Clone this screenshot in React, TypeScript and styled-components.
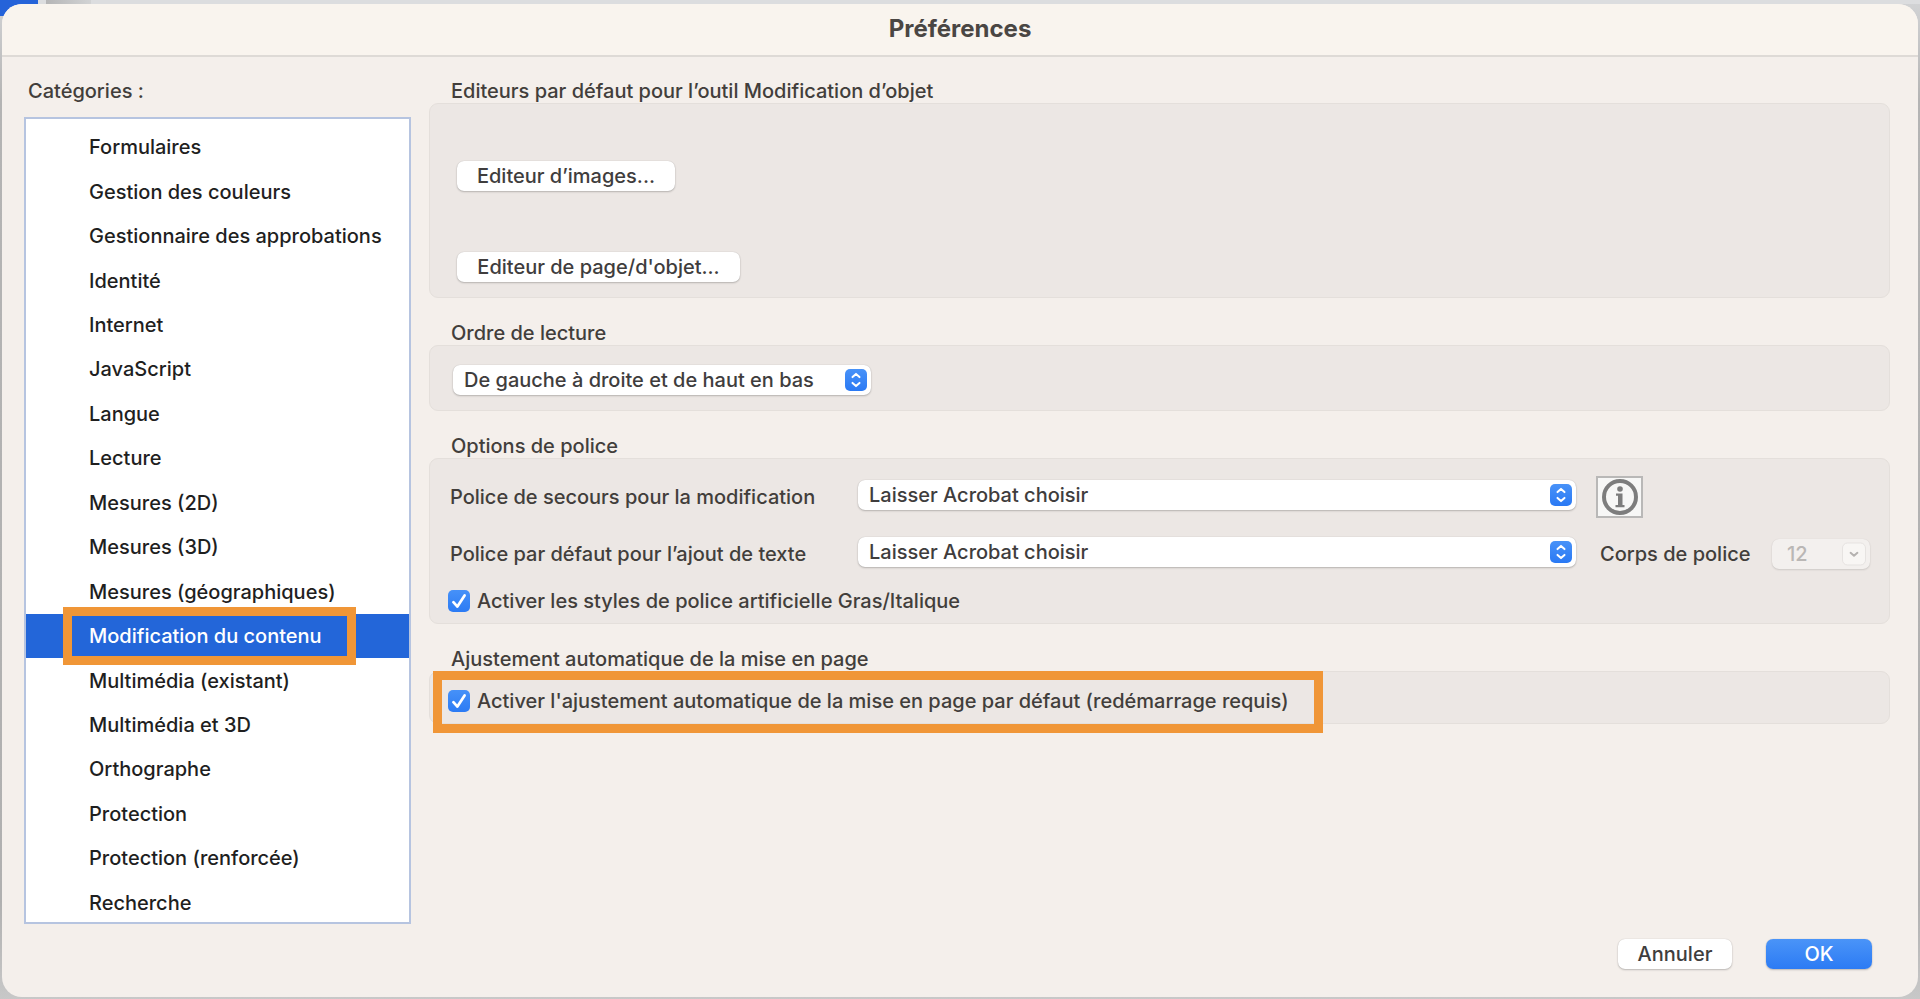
import React, { useId, useState } from "react";
import styled, { createGlobalStyle, css } from "styled-components";

const GlobalStyle = createGlobalStyle`
  *, *::before, *::after { box-sizing: border-box; }
  body {
    margin: 0;
    background: #b9b8b8;
    color: #423e3b;
    font-family: Inter, "Liberation Sans", sans-serif;
    font-size: 20px;
    font-weight: 500;
    line-height: 24px;
  }
  button, select, input { font: inherit; color: inherit; margin: 0; }
`;

const Desktop = styled.div`
  display: flex;
  min-height: 100vh;
  padding: 4px 2px 3px;
  background:
    linear-gradient(#2563d9, #2563d9) 0 0 / 38px 16px no-repeat,
    linear-gradient(90deg, #b5b5b6, #d2d3d4) 46px 0 / 45px 4px no-repeat,
    linear-gradient(#dcdddf, #dcdddf) 0 0 / 100% 4px no-repeat,
    linear-gradient(#d2d3d5, #b4b4b4 100px, #b0b0b0 90%, #c8c8c8);
`;

const Window = styled.div`
  flex: 1;
  display: flex;
  flex-direction: column;
  border-radius: 20px;
  background: #f4efeb;
  overflow: hidden;
`;

const TitleBar = styled.header`
  height: 53px;
  display: flex;
  justify-content: center;
  padding-top: 13px;
  background: #f9f4ee;
  border-bottom: 2px solid #dedad6;
`;

const Title = styled.h1`
  margin: 0;
  font-size: 24px;
  line-height: 24px;
  font-weight: 700;
  color: #4a4643;
`;

const Body = styled.div`
  flex: 1;
  display: flex;
  gap: 18px;
  padding: 22px 28px 0 22px;
`;

const Sidebar = styled.nav`
  flex: none;
  width: 387px;
  display: flex;
  flex-direction: column;
  gap: 14px;
`;

const SidebarLabel = styled.h2`
  margin: 0;
  padding-left: 4px;
  font-size: 20px;
  line-height: 24px;
  font-weight: 500;
`;

const ListFrame = styled.div`
  height: 807px;
  padding-top: 6px;
  border: 2px solid #b6c4e0;
  background: #fff;
  overflow: hidden;
`;

const List = styled.ul`
  height: 800px;
  margin: 0;
  padding: 0;
  list-style: none;
  display: grid;
  grid-auto-rows: 1fr;
`;

const Category = styled.button<{ $selected: boolean }>`
  width: 100%;
  height: 100%;
  padding: 0 0 0 63px;
  border: 0;
  text-align: left;
  white-space: nowrap;
  background: ${(p) => (p.$selected ? "#2366d9" : "transparent")};
  color: ${(p) => (p.$selected ? "#fff" : "#1f1f1f")};
`;

const highlight = css`
  position: relative;
  &::after {
    content: "";
    position: absolute;
    border: 9px solid #f09637;
    pointer-events: none;
  }
`;

const CategoryName = styled.span<{ $marked: boolean }>`
  ${(p) => p.$marked && highlight}
  &::after { inset: -17px -34px -17px -26px; }
`;

const Settings = styled.main`
  flex: 1;
  min-width: 0;
  display: flex;
  flex-direction: column;
  gap: 23px;
`;

const GroupTitle = styled.h2`
  margin: 0;
  padding-left: 22px;
  font-size: 20px;
  line-height: 24px;
  font-weight: 500;
`;

const Panel = styled.div<{ $pad: string; $gap?: number }>`
  display: flex;
  flex-direction: column;
  align-items: flex-start;
  gap: ${(p) => p.$gap ?? 0}px;
  padding: ${(p) => p.$pad};
  border: 1px solid #e4dfdb;
  border-radius: 9px;
  background: #ece7e4;
`;

const PushButton = styled.button<{ $primary?: boolean; $width: number }>`
  width: ${(p) => p.$width}px;
  height: 30px;
  padding: 0;
  border: 0;
  border-radius: 7px;
  white-space: nowrap;
  color: ${(p) => (p.$primary ? "#fff" : "#3f3d3d")};
  background: ${(p) => (p.$primary ? "linear-gradient(#4a94f8, #2c7bf4)" : "#fff")};
  box-shadow: 0 0 1px rgba(0, 0, 0, 0.2), 0 1px 2px rgba(0, 0, 0, 0.22);
`;

const SelectBox = styled.div<{ $width?: number }>`
  position: relative;
  width: ${(p) => (p.$width ? `${p.$width}px` : "100%")};
`;

const NativeSelect = styled.select`
  display: block;
  width: 100%;
  height: 30px;
  padding: 0 40px 0 11px;
  appearance: none;
  border: 0;
  border-radius: 7px;
  background: #fff;
  color: #3f3d3d;
  box-shadow: 0 0 1px rgba(0, 0, 0, 0.2), 0 1px 2px rgba(0, 0, 0, 0.22);
  &:disabled {
    padding: 0 28px 0 15px;
    background: #f3f0ee;
    color: #bab7b5;
    opacity: 1;
    box-shadow: 0 0 1px rgba(0, 0, 0, 0.1), 0 1px 2px rgba(0, 0, 0, 0.12);
  }
`;

const SelectIcon = styled.svg`
  position: absolute;
  top: 3px;
  right: 4px;
  pointer-events: none;
`;

const FontGrid = styled.div`
  width: 100%;
  padding-left: 2px;
  display: grid;
  grid-template-columns: 388px minmax(0, 1fr) 274px;
  grid-auto-rows: 42px;
  gap: 15px 20px;
  align-items: center;
`;

const FieldLabel = styled.label`
  white-space: nowrap;
`;

const FieldControl = styled.div`
  padding-bottom: 4px;
`;

const SizeField = styled.div`
  display: flex;
  align-items: center;
  justify-content: space-between;
  padding-left: 4px;
`;

const InfoButton = styled.button`
  width: 47px;
  height: 42px;
  padding: 0;
  display: flex;
  align-items: center;
  justify-content: center;
  border: 2px solid #b9b8b7;
  background: #f7f7f6;
`;

const CheckLabel = styled.label<{ $marked?: boolean }>`
  display: flex;
  align-items: center;
  gap: 7px;
  height: 22px;
  white-space: nowrap;
  ${(p) => p.$marked && highlight}
  &::after { inset: -19px -34px -21px -15px; }
`;

const CheckBox = styled.span`
  position: relative;
  display: block;
  width: 22px;
  height: 22px;
`;

const CheckInput = styled.input`
  display: block;
  width: 22px;
  height: 22px;
  appearance: none;
  border: 1px solid #c8c4c1;
  border-radius: 5px;
  background: #fff;
  &:checked {
    border: 0;
    background: linear-gradient(#4691f8, #2c7bf4);
  }
`;

const CheckMark = styled.svg`
  position: absolute;
  inset: 0;
  pointer-events: none;
`;

const Footer = styled.footer`
  display: flex;
  justify-content: flex-end;
  gap: 34px;
  padding: 15px 46px 28px;
`;

const categories = [
  "Formulaires",
  "Gestion des couleurs",
  "Gestionnaire des approbations",
  "Identité",
  "Internet",
  "JavaScript",
  "Langue",
  "Lecture",
  "Mesures (2D)",
  "Mesures (3D)",
  "Mesures (géographiques)",
  "Modification du contenu",
  "Multimédia (existant)",
  "Multimédia et 3D",
  "Orthographe",
  "Protection",
  "Protection (renforcée)",
  "Recherche",
];

function PopUp({ id, value, width, label }: { id?: string; value: string; width?: number; label?: string }) {
  return (
    <SelectBox $width={width}>
      <NativeSelect id={id} aria-label={label} defaultValue={value}>
        <option>{value}</option>
      </NativeSelect>
      <SelectIcon width="22" height="24" viewBox="0 0 22 24" aria-hidden="true">
        <defs>
          <linearGradient id="popup-blue" x1="0" y1="0" x2="0" y2="1">
            <stop offset="0" stopColor="#4892f8" />
            <stop offset="1" stopColor="#2a79f4" />
          </linearGradient>
        </defs>
        <rect y="1" width="22" height="22" rx="5" fill="url(#popup-blue)" />
        <path d="M7.5 9.1 11 5.9l3.5 3.2M7.5 14.9l3.5 3.2 3.5-3.2" fill="none" stroke="#fff" strokeWidth="2" strokeLinecap="round" strokeLinejoin="round" />
      </SelectIcon>
    </SelectBox>
  );
}

function Check({ text, marked }: { text: string; marked?: boolean }) {
  const [on, setOn] = useState(true);
  return (
    <CheckLabel $marked={marked}>
      <CheckBox>
        <CheckInput type="checkbox" checked={on} onChange={() => setOn(!on)} />
        {on && (
          <CheckMark width="22" height="22" viewBox="0 0 22 22" aria-hidden="true">
            <path d="M5.4 12.2 9.4 16.6 16.6 5.4" fill="none" stroke="#fff" strokeWidth="2.7" strokeLinecap="round" strokeLinejoin="round" />
          </CheckMark>
        )}
      </CheckBox>
      {text}
    </CheckLabel>
  );
}

function Group({ title, pad, gap, children }: { title: string; pad: string; gap?: number; children: React.ReactNode }) {
  return (
    <section>
      <GroupTitle>{title}</GroupTitle>
      <Panel $pad={pad} $gap={gap}>
        {children}
      </Panel>
    </section>
  );
}

export default function App() {
  const [selected, setSelected] = useState("Modification du contenu");
  const uid = useId();

  return (
    <>
      <GlobalStyle />
      <Desktop>
        <Window>
          <TitleBar>
            <Title>Préférences</Title>
          </TitleBar>
          <Body>
            <Sidebar>
              <SidebarLabel>Catégories :</SidebarLabel>
              <ListFrame>
                <List>
                  {categories.map((name) => (
                    <li key={name}>
                      <Category
                        type="button"
                        $selected={name === selected}
                        aria-current={name === selected}
                        onClick={() => setSelected(name)}
                      >
                        <CategoryName $marked={name === selected}>{name}</CategoryName>
                      </Category>
                    </li>
                  ))}
                </List>
              </ListFrame>
            </Sidebar>
            <Settings>
              <Group title="Editeurs par défaut pour l’outil Modification d’objet" pad="57px 27px 15px" gap={61}>
                <PushButton type="button" $width={218}>Editeur d’images...</PushButton>
                <PushButton type="button" $width={283}>Editeur de page/d'objet...</PushButton>
              </Group>
              <Group title="Ordre de lecture" pad="19px 23px 15px">
                <PopUp value="De gauche à droite et de haut en bas" width={418} label="Ordre de lecture" />
              </Group>
              <Group title="Options de police" pad="17px 19px 11px 18px" gap={15}>
                <FontGrid>
                  <FieldLabel htmlFor={`${uid}-fallback`}>Police de secours pour la modification</FieldLabel>
                  <FieldControl>
                    <PopUp id={`${uid}-fallback`} value="Laisser Acrobat choisir" />
                  </FieldControl>
                  <InfoButton type="button" aria-label="Informations">
                    <svg width="36" height="36" viewBox="0 0 36 36" aria-hidden="true">
                      <circle cx="18" cy="18" r="16" fill="none" stroke="#7d7d7d" strokeWidth="4" />
                      <circle cx="18" cy="10" r="2.8" fill="#7d7d7d" />
                      <path d="M14 14.5h6.5V26h2v2.2h-9V26H16v-9.2h-2z" fill="#7d7d7d" />
                    </svg>
                  </InfoButton>
                  <FieldLabel htmlFor={`${uid}-default`}>Police par défaut pour l’ajout de texte</FieldLabel>
                  <FieldControl>
                    <PopUp id={`${uid}-default`} value="Laisser Acrobat choisir" />
                  </FieldControl>
                  <SizeField>
                    <FieldLabel htmlFor={`${uid}-size`}>Corps de police</FieldLabel>
                    <SelectBox $width={98}>
                      <NativeSelect id={`${uid}-size`} disabled defaultValue="12">
                        <option>12</option>
                      </NativeSelect>
                      <SelectIcon width="24" height="24" viewBox="0 0 24 24" aria-hidden="true">
                        <rect x="0.5" y="1" width="23" height="22" rx="5" fill="#f8f6f4" stroke="#e6e3e1" />
                        <path d="M8.6 10.8 12 13.8l3.4-3" fill="none" stroke="#b5b2b0" strokeWidth="2" strokeLinecap="round" strokeLinejoin="round" />
                      </SelectIcon>
                    </SelectBox>
                  </SizeField>
                </FontGrid>
                <Check text="Activer les styles de police artificielle Gras/Italique" />
              </Group>
              <Group title="Ajustement automatique de la mise en page" pad="18px 18px 11px">
                <Check marked text="Activer l'ajustement automatique de la mise en page par défaut (redémarrage requis)" />
              </Group>
            </Settings>
          </Body>
          <Footer>
            <PushButton type="button" $width={114}>Annuler</PushButton>
            <PushButton type="button" $primary $width={106}>OK</PushButton>
          </Footer>
        </Window>
      </Desktop>
    </>
  );
}
